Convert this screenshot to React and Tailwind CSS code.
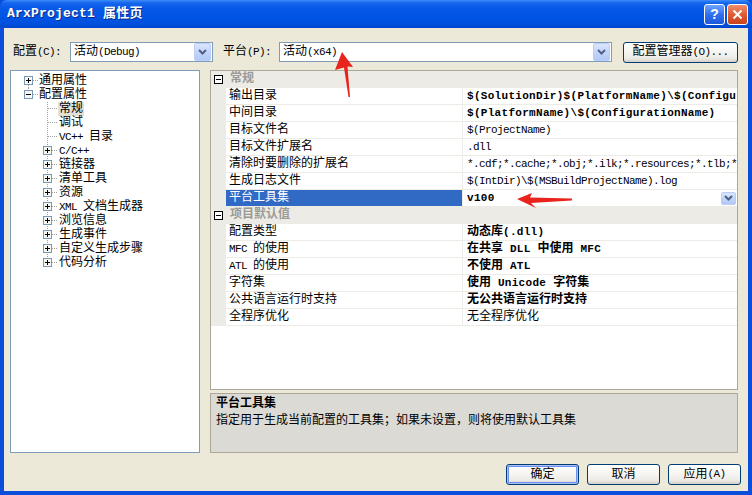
import React from "react";

// SimSun look-alike: half-width latin at 6px (7px bold), CJK at 12px
const isAscii = (s) => /^[\x00-\x7F]+$/.test(s);

const Txt = ({ s, b }) => (
  <>
    {s
      .split(/([\x00-\x7F]+)/)
      .filter(Boolean)
      .map((p, i) =>
        isAscii(p) ? (
          <span key={i} className={b ? "text-[11px] tracking-[0.3px]" : "text-[11px] tracking-[-0.6px]"}>
            {p}
          </span>
        ) : (
          <span key={i}>{p}</span>
        )
      )}
  </>
);

const ComboArrow = () => (
  <div className="w-[17px] h-[18px] mr-px rounded-[2px] border border-[#b9cdf6] bg-[linear-gradient(180deg,#dbe6fd_0%,#c3d5fc_50%,#b3c8f7_100%)] flex items-center justify-center">
    <svg width="9" height="6" viewBox="0 0 9 6">
      <polyline points="1,1 4.5,4.5 8,1" fill="none" stroke="#4d6185" strokeWidth="2" />
    </svg>
  </div>
);

const Combo = ({ value, width }) => (
  <div className={`${width} h-[20px] border border-[#7f9db9] bg-white flex items-center`}>
    <div className="flex-1 pl-[3px] leading-[18px] whitespace-nowrap overflow-hidden">
      <Txt s={value} />
    </div>
    <ComboArrow />
  </div>
);

const XPButton = ({ label, width = "w-[73px]", isDefault }) => (
  <button
    className={`${width} h-[21px] rounded-[3px] border border-[#003c74] bg-[linear-gradient(180deg,#ffffff_0%,#f6f5f1_45%,#ecebe6_80%,#d6d0c5_100%)] flex items-center justify-center leading-none ${
      isDefault ? "shadow-[inset_0_0_0_1px_#a9c2f3,inset_0_0_0_2px_#6d8ff0]" : ""
    }`}
  >
    <Txt s={label} />
  </button>
);

const TreeBox = ({ minus }) => (
  <>
    <rect x="4.5" y="2.5" width="8" height="8" fill="#f6f6f2" stroke="#7898b5" />
    <line x1="6" y1="6.5" x2="11" y2="6.5" stroke="#000" />
    {!minus && <line x1="8.5" y1="4" x2="8.5" y2="9" stroke="#000" />}
  </>
);

const dot = { stroke: "#a0a0a0", strokeDasharray: "1 1" };

const tree = [
  { label: "通用属性", root: true, box: "plus", first: true },
  { label: "配置属性", root: true, box: "minus" },
  { label: "常规", selected: true },
  { label: "调试" },
  { label: "VC++ 目录" },
  { label: "C/C++", box: "plus" },
  { label: "链接器", box: "plus" },
  { label: "清单工具", box: "plus" },
  { label: "资源", box: "plus" },
  { label: "XML 文档生成器", box: "plus" },
  { label: "浏览信息", box: "plus" },
  { label: "生成事件", box: "plus" },
  { label: "自定义生成步骤", box: "plus" },
  { label: "代码分析", box: "plus", last: true },
];

const TreeRow = ({ item }) => (
  <div className={`flex items-center h-[14px] ${item.root ? "pl-[9px]" : "pl-[28px]"}`}>
    <svg width="18" height="14" viewBox="0 0 18 14" className="shrink-0">
      {item.root ? (
        <>
          {item.first ? (
            <line x1="8.5" y1="7" x2="8.5" y2="14" style={dot} />
          ) : (
            <line x1="8.5" y1="0" x2="8.5" y2="7" style={dot} />
          )}
          <line x1="9" y1="6.5" x2="18" y2="6.5" style={dot} />
        </>
      ) : (
        <>
          <line x1="8.5" y1="0" x2="8.5" y2={item.last ? 7 : 14} style={dot} />
          <line x1="9" y1="6.5" x2="18" y2="6.5" style={dot} />
        </>
      )}
      {item.box && <TreeBox minus={item.box === "minus"} />}
    </svg>
    <span
      className={`leading-[14px] whitespace-nowrap px-px ${item.root ? "" : "ml-px"} ${
        item.selected ? "bg-[#e3e1d8]" : ""
      }`}
    >
      <Txt s={item.label} />
    </span>
  </div>
);

const general = [
  ["输出目录", "$(SolutionDir)$(PlatformName)\\$(Configu", true],
  ["中间目录", "$(PlatformName)\\$(ConfigurationName)", true],
  ["目标文件名", "$(ProjectName)"],
  ["目标文件扩展名", ".dll"],
  ["清除时要删除的扩展名", "*.cdf;*.cache;*.obj;*.ilk;*.resources;*.tlb;*"],
  ["生成日志文件", "$(IntDir)\\$(MSBuildProjectName).log"],
];

const defaults = [
  ["配置类型", "动态库(.dll)", true],
  ["MFC 的使用", "在共享 DLL 中使用 MFC", true],
  ["ATL 的使用", "不使用 ATL", true],
  ["字符集", "使用 Unicode 字符集", true],
  ["公共语言运行时支持", "无公共语言运行时支持", true],
  ["全程序优化", "无全程序优化"],
];

const Category = ({ label }) => (
  <div className="h-[17px] flex items-center bg-[#ecebe5]">
    <svg width="9" height="9" viewBox="0 0 9 9" className="ml-[3px] shrink-0">
      <rect x="0.5" y="0.5" width="8" height="8" fill="#fff" stroke="#000" />
      <line x1="2" y1="4.5" x2="7" y2="4.5" stroke="#000" />
    </svg>
    <span className="ml-[7px] font-bold text-[#9a9a96] leading-[17px]">{label}</span>
  </div>
);

const PropRow = ({ name, value, bold, selected }) => (
  <div className="h-[17px] flex">
    <div className="w-[15px] bg-[#ecebe5]" />
    <div
      className={`w-[237px] border-r border-b border-[#ecebe5] pl-[3px] leading-[16px] whitespace-nowrap overflow-hidden ${
        selected ? "bg-[#316ac5] text-white" : ""
      }`}
    >
      <Txt s={name} />
    </div>
    <div className="flex-1 min-w-0 flex items-center border-b border-[#ecebe5] pl-[4px]">
      <div className={`flex-1 leading-[16px] whitespace-nowrap overflow-hidden ${bold ? "font-bold" : ""}`}>
        <Txt s={value} b={bold} />
      </div>
      {selected && (
        <div className="w-[15px] h-[13px] mr-[1px] rounded-[2px] border border-[#b9cdf6] bg-[linear-gradient(180deg,#dbe6fd_0%,#c3d5fc_50%,#b3c8f7_100%)] flex items-center justify-center">
          <svg width="9" height="6" viewBox="0 0 9 6">
            <polyline points="1,1 4.5,4.5 8,1" fill="none" stroke="#4d6185" strokeWidth="2" />
          </svg>
        </div>
      )}
    </div>
  </div>
);

const App = () => {
  return (
    <div className="relative w-[752px] h-[495px] overflow-hidden bg-[#0b4edc] flex flex-col text-[12px] text-black font-[family-name:Liberation_Mono,Noto_Sans_CJK_SC,monospace]">
      {/* title bar */}
      <div className="h-[28px] shrink-0 rounded-t-[7px] flex items-center pl-[7px] pr-[4px] bg-[linear-gradient(180deg,#3c8cf8_0px,#1565ee_3px,#0759e6_8px,#0054e3_18px,#0150dc_24px,#0145cc_28px)]">
        <span className="text-white font-bold text-[13px] tracking-[0.2px] [text-shadow:1px_1px_0_#0a2a8a]">
          ArxProject1 属性页
        </span>
        <div className="ml-auto flex gap-[2px]">
          <div className="w-[21px] h-[21px] rounded-[3px] border border-white bg-[linear-gradient(180deg,#6fa5ff_0%,#2f6ff0_50%,#1d58dc_100%)] flex items-center justify-center text-white font-bold text-[14px] leading-none font-[family-name:Liberation_Sans,sans-serif]">
            ?
          </div>
          <div className="w-[21px] h-[21px] rounded-[3px] border border-white bg-[linear-gradient(180deg,#ee8f6f_0%,#e25b32_50%,#c8421a_100%)] flex items-center justify-center">
            <svg width="11" height="11" viewBox="0 0 11 11">
              <path d="M1.5 1.5 L9.5 9.5 M9.5 1.5 L1.5 9.5" stroke="#fff" strokeWidth="2" />
            </svg>
          </div>
        </div>
      </div>

      {/* client area */}
      <div className="flex-1 mx-[4px] mb-[4px] bg-[#ece9d8] flex flex-col">
        <div className="h-[22px] mt-[13px] flex items-center pl-[9px]">
          <span className="w-[57px] whitespace-nowrap">
            <Txt s="配置(C):" />
          </span>
          <Combo value="活动(Debug)" width="w-[143px]" />
          <span className="w-[56px] ml-[10px] whitespace-nowrap">
            <Txt s="平台(P):" />
          </span>
          <Combo value="活动(x64)" width="w-[333px]" />
          <div className="ml-[11px]">
            <XPButton label="配置管理器(O)..." width="w-[115px]" />
          </div>
        </div>

        <div className="flex mt-[7px] pl-[6px]">
          {/* tree */}
          <div className="w-[190px] h-[383px] border border-[#7f9db9] bg-white pt-[3px]">
            {tree.map((item) => (
              <TreeRow key={item.label} item={item} />
            ))}
          </div>

          {/* property grid + help */}
          <div className="ml-[10px] w-[528px] flex flex-col">
            <div className="h-[320px] border border-[#aca899] bg-white overflow-hidden">
              <Category label="常规" />
              {general.map(([n, v, b]) => (
                <PropRow key={n} name={n} value={v} bold={b} />
              ))}
              <PropRow name="平台工具集" value="v100" bold selected />
              <Category label="项目默认值" />
              {defaults.map(([n, v, b]) => (
                <PropRow key={n} name={n} value={v} bold={b} />
              ))}
            </div>
            <div className="mt-[3px] h-[60px] border border-[#aca899] bg-[#dcdad4] pl-[5px] pt-[2px]">
              <div className="font-bold leading-[17px]">平台工具集</div>
              <div className="leading-[17px]">
                <Txt s="指定用于生成当前配置的工具集；如果未设置，则将使用默认工具集" />
              </div>
            </div>
          </div>
        </div>

        <div className="flex justify-end gap-[8px] mt-[11px] pr-[7px]">
          <XPButton label="确定" isDefault />
          <XPButton label="取消" />
          <XPButton label="应用(A)" />
        </div>
      </div>

      {/* red annotation arrows drawn over the screenshot */}
      <svg className="absolute inset-0 pointer-events-none" width="752" height="495" viewBox="0 0 752 495">
        <polygon points="342,52 353,67 347.5,66.5 350,97 348.5,97 344,67.5 335,70" fill="#e8241c" />
        <polygon points="517,199 532,193 530,197.5 572,198.5 572,200.5 531,203 536,208" fill="#e8241c" />
      </svg>
    </div>
  );
};

export default App;
